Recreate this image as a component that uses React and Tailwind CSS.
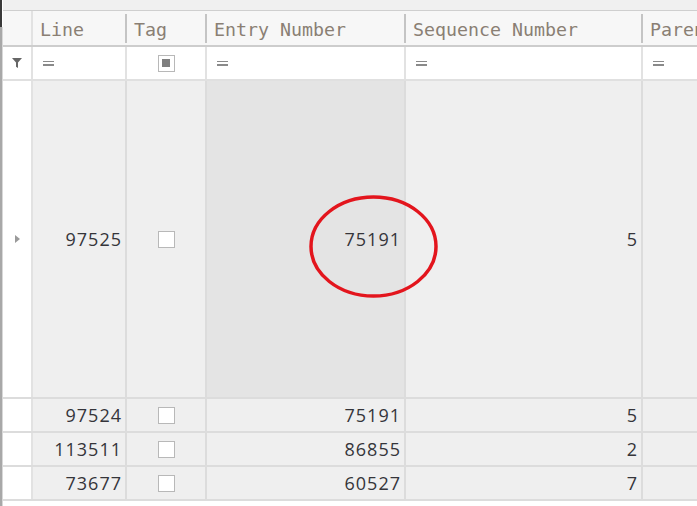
const cols = [
  { key: "line", title: "Line", w: "w-[94px]" },
  { key: "tag", title: "Tag", w: "w-[80px]" },
  { key: "entry", title: "Entry Number", w: "w-[199px]" },
  { key: "seq", title: "Sequence Number", w: "w-[237px]" },
];

const rows = [
  { line: "97525", entry: "75191", seq: "5", tall: true },
  { line: "97524", entry: "75191", seq: "5" },
  { line: "113511", entry: "86855", seq: "2" },
  { line: "73677", entry: "60527", seq: "7" },
];

const mono = { fontFamily: '"DejaVu Sans Mono", "Liberation Mono", monospace' };
const sans = { fontFamily: '"Open Sans", "Noto Sans", sans-serif' };

function Equals() {
  return (
    <div className="flex flex-col gap-[2px]">
      <div className="h-[1.5px] w-[11px] bg-[#8a8a8a]" />
      <div className="h-[1.5px] w-[11px] bg-[#8a8a8a]" />
    </div>
  );
}

function Checkbox({ filter }) {
  return (
    <div className="flex h-[17px] w-[17px] items-center justify-center border-[1.5px] border-[#b8b8b8] bg-white">
      {filter && <div className="h-[8px] w-[8px] bg-[#7f7f7f]" />}
    </div>
  );
}

function HeaderCell({ title, w }) {
  return (
    <div className={`${w} flex items-center justify-between`}>
      <span className="pl-[7px] pt-[4px] text-[18.3px] text-[#8a7f74]" style={mono}>
        {title}
      </span>
      <div className="h-[29px] w-[2px] bg-[#c4c4c4]" />
    </div>
  );
}

function FilterCell({ w, tag }) {
  return (
    <div
      className={`${w} flex items-center border-r-2 border-[#e2e2e2] ${
        tag ? "justify-center" : "pl-[10px]"
      }`}
    >
      {tag ? <Checkbox filter /> : <Equals />}
    </div>
  );
}

function DataRow({ row }) {
  const h = row.tall ? "h-[318px]" : "h-[34px]";
  return (
    <div className={`flex ${h} border-b-2 border-[#dcdcdc] text-[18px] tracking-[1px] text-[#35353a]`} style={sans}>
      <div className="flex w-[30px] items-center justify-center border-r-2 border-[#e2e2e2] bg-white">
        {row.tall && (
          <svg width="5" height="8" viewBox="0 0 5 8">
            <polygon points="0,0 5,4 0,8" fill="#9a9a9a" />
          </svg>
        )}
      </div>
      <div className="flex w-[94px] items-center justify-end border-r-2 border-[#dcdcdc] bg-[#efefef] pr-[3px]">
        {row.line}
      </div>
      <div className="flex w-[80px] items-center justify-center border-r-2 border-[#dcdcdc] bg-[#efefef]">
        <Checkbox />
      </div>
      <div
        className={`flex w-[199px] items-center justify-end border-r-2 border-[#dcdcdc] pr-[3px] ${
          row.tall ? "bg-[#e4e4e4]" : "bg-[#efefef]"
        }`}
      >
        {row.entry}
      </div>
      <div className="flex w-[237px] items-center justify-end border-r-2 border-[#dcdcdc] bg-[#efefef] pr-[3px]">
        {row.seq}
      </div>
      <div className="flex-1 bg-[#efefef]" />
    </div>
  );
}

export default function App() {
  return (
    <div className="relative flex h-[506px] w-[697px] overflow-hidden bg-white">
      <div className="flex w-[3px] flex-col">
        <div className="h-[27px] w-[2px] bg-[#3a3a3a]" />
        <div className="flex flex-1">
          <div className="w-[2px] bg-[#a8a8a8]" />
          <div className="w-[1px] bg-[#d8d8d8]" />
        </div>
      </div>

      <div className="flex flex-1 flex-col">
        <div className="h-[11px] border-b border-[#cfcfcf] bg-[#f0f0f0]" />

        <div className="flex h-[36px] border-b-2 border-[#cdcdcd] bg-[#f7f7f7]">
          <div className="w-[30px] border-r-2 border-[#e2e2e2]" />
          {cols.map((c) => (
            <HeaderCell key={c.key} title={c.title} w={c.w} />
          ))}
          <div className="flex flex-1 items-center overflow-hidden whitespace-nowrap">
            <span className="pl-[7px] pt-[4px] text-[18.3px] text-[#8a7f74]" style={mono}>
              Parent
            </span>
          </div>
        </div>

        <div className="flex h-[34px] border-b-2 border-[#e0e0e0] bg-white">
          <div className="flex w-[30px] items-center justify-center border-r-2 border-[#e2e2e2]">
            <svg width="10" height="10" viewBox="0 0 10 10">
              <path d="M0 0H10L6 4.5V10L4 8.8V4.5Z" fill="#666" />
            </svg>
          </div>
          {cols.map((c) => (
            <FilterCell key={c.key} w={c.w} tag={c.key === "tag"} />
          ))}
          <div className="flex flex-1 items-center pl-[10px]">
            <Equals />
          </div>
        </div>

        {rows.map((r, i) => (
          <DataRow key={i} row={r} />
        ))}
      </div>

      <svg className="pointer-events-none absolute left-[308px] top-[194px]" width="131" height="105" viewBox="0 0 131 105">
        <ellipse cx="65.5" cy="52.5" rx="62.5" ry="49.5" fill="none" stroke="#e3151d" strokeWidth="3.5" />
      </svg>
    </div>
  );
}
